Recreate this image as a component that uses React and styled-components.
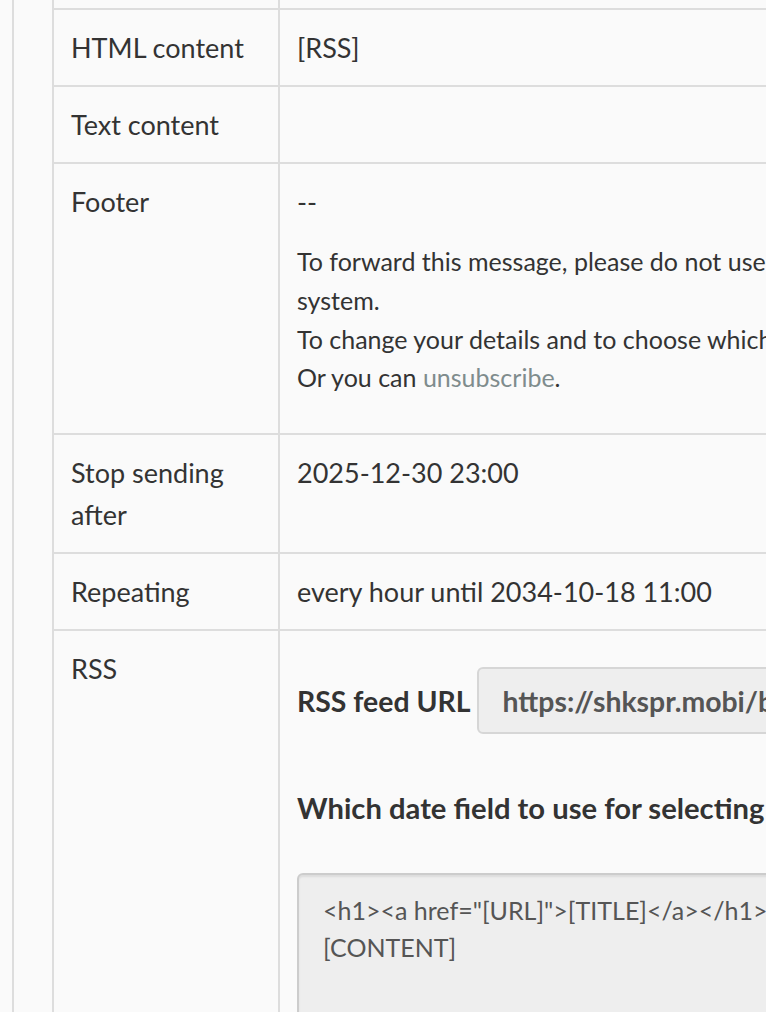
import React from "react";
import styled, { createGlobalStyle } from "styled-components";

const Global = createGlobalStyle`
  html, body {
    margin: 0;
    padding: 0;
    background: #fafafa;
    overflow: hidden;
  }
  body {
    font-family: Lato, "Liberation Sans", sans-serif;
    color: #333;
  }
`;

const Page = styled.div`
  padding-left: 12px;
  margin-top: -69px;
`;

const Panel = styled.div`
  border-left: 2px solid #ddd;
  padding-left: 38px;
  min-height: 1300px;
`;

const Table = styled.table`
  border-collapse: collapse;
  border: 2px solid #ddd;
  font-size: 27px;
  line-height: 42px;
  background: #fafafa;
`;

const HeadCell = styled.th`
  width: 190px;
  min-width: 190px;
  max-width: 190px;
  text-align: left;
  font-weight: 400;
  vertical-align: top;
  padding: 16.5px 17px;
  border: 2px solid #ddd;
`;

const Cell = styled.td`
  vertical-align: top;
  padding: 16.5px 17px;
  border: 2px solid #ddd;
  white-space: nowrap;
  min-width: 1100px;
`;

const Dash = styled.div``;

const FooterText = styled.div`
  font-size: 25px;
  line-height: 38.75px;
  margin: 19.5px 0;
`;

const Link = styled.a`
  color: #7f8c8d;
  text-decoration: none;
`;

const FieldRow = styled.div`
  margin-top: 19.5px;
  display: flex;
  align-items: center;
  gap: 6px;
`;

const FieldLabel = styled.label`
  font-weight: 700;
  font-size: 28.4px;
`;

const UrlInput = styled.input`
  box-sizing: border-box;
  height: 67px;
  width: 760px;
  border: 2px solid #d6d6d6;
  border-radius: 6px;
  background: #eee;
  color: #555;
  font-family: Lato, "Liberation Sans", sans-serif;
  font-weight: 700;
  font-size: 28.4px;
  padding: 0 24px;
  outline: none;
`;

const Question = styled.div`
  margin-top: 53px;
  font-weight: 700;
  font-size: 29.2px;
`;

const Template = styled.textarea`
  display: block;
  box-sizing: border-box;
  margin-top: 44px;
  width: 900px;
  height: 320px;
  border: 2px solid #ccc;
  border-radius: 6px;
  background: #eee;
  box-shadow: inset 0 2px 2px rgba(0, 0, 0, 0.08);
  color: #555;
  font-family: Lato, "Liberation Sans", sans-serif;
  font-size: 25px;
  line-height: 37px;
  padding: 17px 24px;
  resize: none;
  outline: none;
`;

const rows = [
  { key: "previous", label: "\u00a0", value: "\u00a0" },
  { key: "html", label: "HTML content", value: "[RSS]" },
  { key: "text", label: "Text content", value: "\u00a0" },
];

export default function App() {
  return (
    <>
      <Global />
      <Page>
        <Panel>
          <Table>
            <tbody>
              {rows.map((r) => (
                <tr key={r.key}>
                  <HeadCell>{r.label}</HeadCell>
                  <Cell>{r.value}</Cell>
                </tr>
              ))}
              <tr>
                <HeadCell>Footer</HeadCell>
                <Cell>
                  <Dash>--</Dash>
                  <FooterText>
                    To forward this message, please do not use the forward button of your email application, because this message was made specifically for you only. Instead use the forward page in our newsletter
                    <br />
                    system.
                    <br />
                    To change your details and to choose which lists to be subscribed to, visit your personal preferences page.
                    <br />
                    Or you can <Link href="#">unsubscribe</Link>.
                  </FooterText>
                </Cell>
              </tr>
              <tr>
                <HeadCell>Stop sending after</HeadCell>
                <Cell>2025-12-30 23:00</Cell>
              </tr>
              <tr>
                <HeadCell>Repeating</HeadCell>
                <Cell>every hour until 2034-10-18 11:00</Cell>
              </tr>
              <tr>
                <HeadCell>RSS</HeadCell>
                <Cell>
                  <FieldRow>
                    <FieldLabel htmlFor="rss-url">RSS feed URL</FieldLabel>
                    <UrlInput id="rss-url" readOnly value="https://shkspr.mobi/blog/feed/" />
                  </FieldRow>
                  <Question>Which date field to use for selecting feed items</Question>
                  <Template
                    readOnly
                    value={'<h1><a href="[URL]">[TITLE]</a></h1>\n[CONTENT]'}
                  />
                </Cell>
              </tr>
            </tbody>
          </Table>
        </Panel>
      </Page>
    </>
  );
}
